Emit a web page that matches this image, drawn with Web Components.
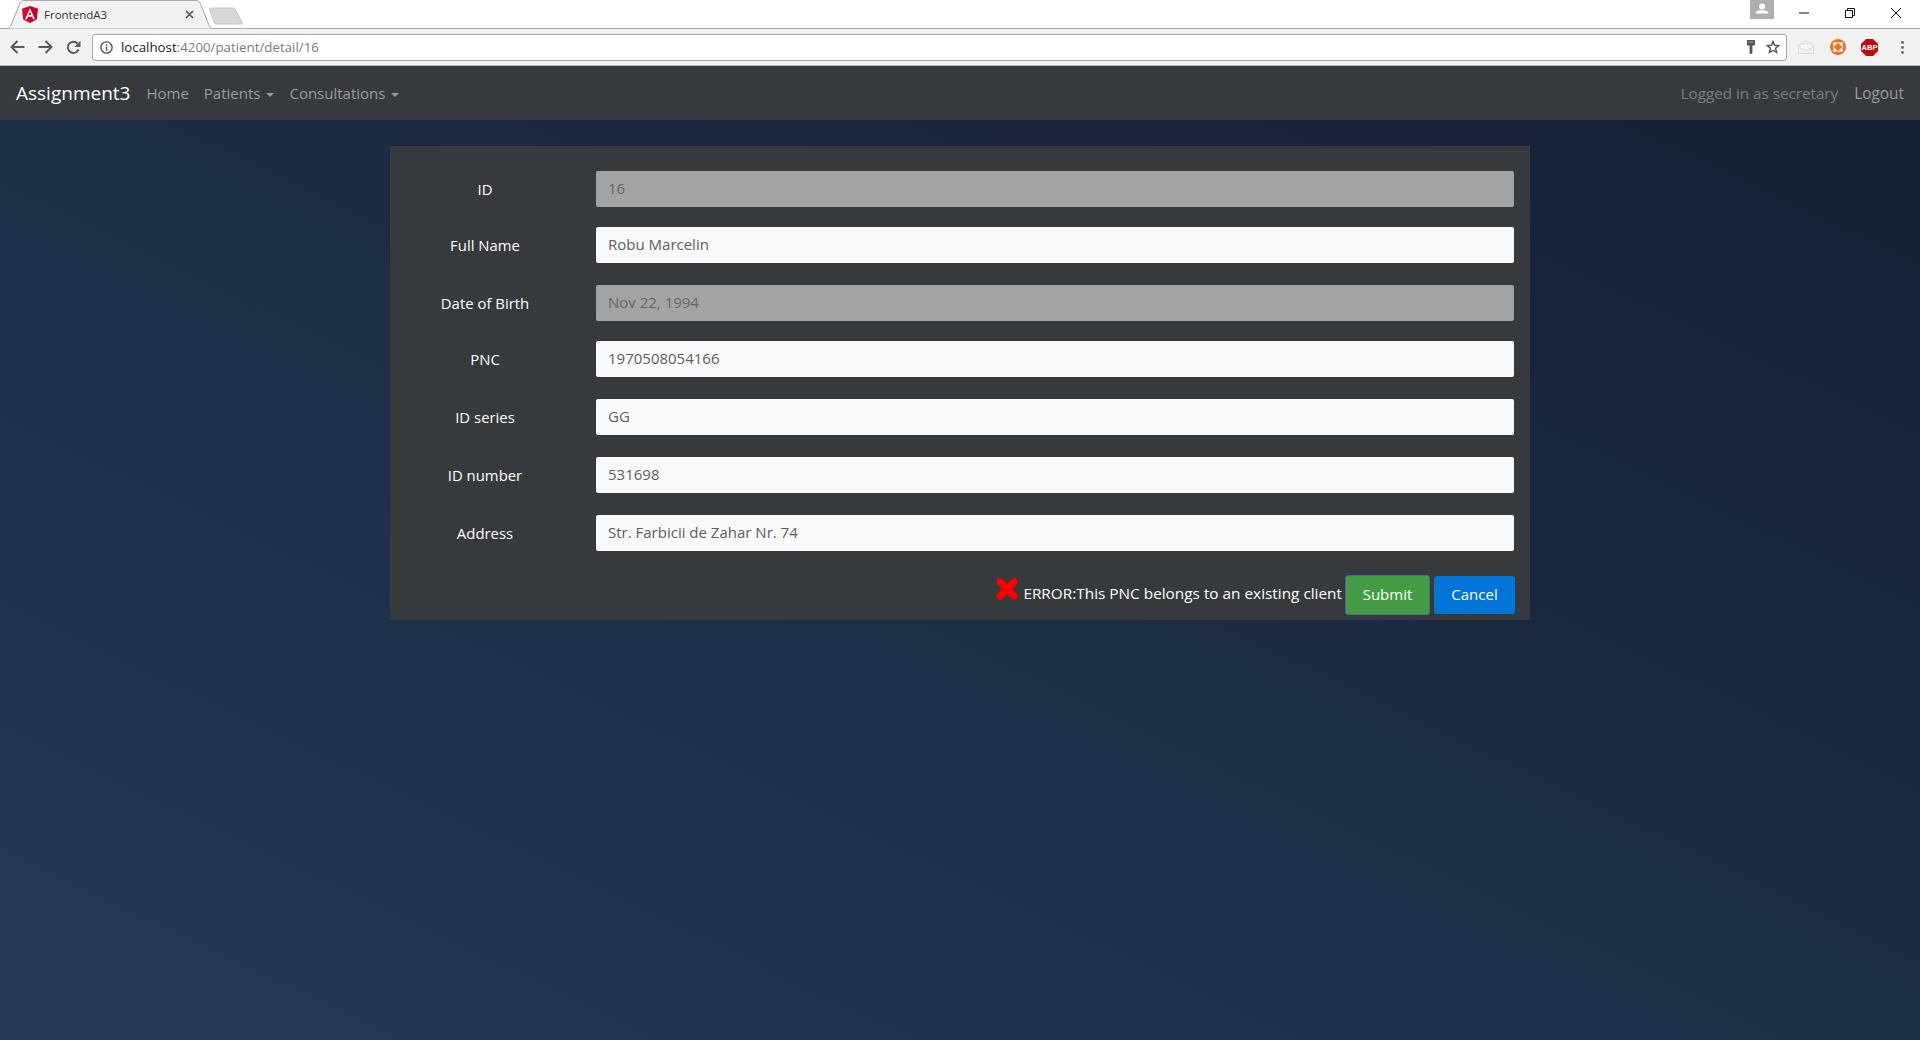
<!DOCTYPE html>
<html>
<head>
<meta charset="utf-8">
<title>FrontendA3</title>
<style>
  html, body { margin: 0; height: 100%; }
  body {
    height: 1040px;
    overflow: hidden;
    display: flex;
    flex-direction: column;
    font-family: "Open Sans", "Noto Sans", sans-serif;
    background: #1c2c48;
  }
</style>
</head>
<body>
<browser-chrome title-text="FrontendA3" host-part="localhost" path-part=":4200/patient/detail/16"></browser-chrome>
<app-navbar brand="Assignment3" user="Logged in as secretary"></app-navbar>
<page-main>
  <patient-form>
    <form-row label="ID" value="16" disabled></form-row>
    <form-row label="Full Name" value="Robu Marcelin"></form-row>
    <form-row label="Date of Birth" value="Nov 22, 1994" disabled></form-row>
    <form-row label="PNC" value="1970508054166"></form-row>
    <form-row label="ID series" value="GG"></form-row>
    <form-row label="ID number" value="531698"></form-row>
    <form-row label="Address" value="Str. Farbicii de Zahar Nr. 74"></form-row>
    <form-actions message="ERROR:This PNC belongs to an existing client"></form-actions>
  </patient-form>
</page-main>

<script>
class BrowserChrome extends HTMLElement {
  constructor() {
    super();
    const shadow = this.attachShadow({mode: 'open'});
    shadow.innerHTML = `
      <style>
        :host {
          display: block;
          height: 66px;
          flex: none;
          font-family: "Open Sans", sans-serif;
          background: #f2f2f2;
        }
        svg { display: block; flex: none; }
        #strip {
          height: 29px;
          box-sizing: border-box;
          background: linear-gradient(#fff 28px, #a9a9a9 28px);
          display: flex;
          align-items: flex-start;
        }
        #tab {
          position: relative;
          margin-left: 6px;
          width: 206px;
          height: 29px;
          display: flex;
          align-items: center;
          flex: none;
        }
        #tab-bg { position: absolute; left: 0; top: 0; }
        #tab > :not(#tab-bg) { position: relative; }
        #favicon { margin-left: 16px; margin-top: -1px; }
        #title {
          margin-left: 6px;
          font-size: 11.5px;
          color: #333;
          flex: 1;
          margin-top: -1px;
        }
        #tab-close { margin-right: 18px; margin-top: -1px; }
        #new-tab { margin: 7px 0 0 -3px; }
        #window {
          margin-left: auto;
          display: flex;
          align-items: flex-start;
        }
        #user { margin-right: 25px; }
        #win-min { margin: 12px 36px 0 0; }
        #win-max { margin: 8px 36px 0 0; }
        #win-close { margin: 8px 19px 0 0; }
        #toolbar {
          height: 36px;
          display: flex;
          align-items: center;
          border-bottom: 1px solid #b9b9b9;
        }
        #nav-icons {
          display: flex;
          align-items: center;
          gap: 13px;
          margin: 0 11px 0 10px;
        }
        #omnibox {
          flex: none;
          width: 1695px;
          height: 27px;
          box-sizing: border-box;
          background: #fff;
          border: 1px solid #a9a9a9;
          border-radius: 3px;
          display: flex;
          align-items: center;
          padding: 0 6px 0 7px;
        }
        #url {
          margin-left: 8px;
          font-size: 13.3px;
          color: #7a7a7a;
          flex: 1;
          white-space: nowrap;
        }
        #url b { font-weight: 400; color: #222; }
        #omni-right { display: flex; gap: 11px; align-items: center; }
        #ext {
          display: flex;
          align-items: center;
          margin-left: 11px;
        }
        #abp { position: relative; width: 17px; height: 17px; margin: 0 23px 0 15px; }
        #abp svg { position: absolute; left: 0; top: 0; }
        #abp span {
          position: relative;
          display: block;
          font: 700 7.5px/17px "Liberation Sans", sans-serif;
          color: #fff;
          text-align: center;
        }
      </style>
      <div id="strip">
        <div id="tab">
          <svg id="tab-bg" width="206" height="29" viewBox="0 0 206 29">
            <path d="M0 28.5 H1 C3 28.5 4 27 5 25 L14 3 C15 1 16 .5 18 .5 H190 C192 .5 193 1 194 3 L203 25 C204 27 205 28.5 206 28.5" fill="#f2f2f2" stroke="#a9a9a9"/>
          </svg>
          <svg id="favicon" width="16" height="17" viewBox="0 0 16 17">
            <path d="M8 0 L0 2.8 L1.2 13.4 L8 17 Z" fill="#dd0031"/>
            <path d="M8 0 L16 2.8 L14.8 13.4 L8 17 Z" fill="#c3002f"/>
            <path d="M8 2.2 L3 13.2 H4.9 L5.9 10.7 H10.1 L11.1 13.2 H13 Z M6.6 9.1 L8 5.8 L9.4 9.1 Z" fill="#fff" fill-rule="evenodd"/>
          </svg>
          <span id="title"></span>
          <svg id="tab-close" width="9" height="9" viewBox="0 0 9 9">
            <path d="M1 1 L8 8 M8 1 L1 8" stroke="#5a5a5a" stroke-width="1.7"/>
          </svg>
        </div>
        <svg id="new-tab" width="34" height="18" viewBox="0 0 34 18">
          <path d="M1.5 1 H24 C25 1 25.5 1.4 26 2.2 L33 15 C33.6 16.4 33 17 32 17 H7 C6 17 5.4 16.5 5 15.6 L.6 2.4 C.3 1.5 .6 1 1.5 1 Z" fill="#d6d6d6" stroke="#c6c6c6"/>
        </svg>
        <div id="window">
          <svg id="user" width="24" height="19" viewBox="0 0 24 19">
            <rect width="24" height="19" fill="#aeaeae"/>
            <circle cx="12" cy="6.6" r="3" fill="#fff"/>
            <path d="M5.5 13.5 C6 10.8 9 10.3 12 10.3 C15 10.3 18 10.8 18.5 13.5 Z" fill="#fff"/>
          </svg>
          <svg id="win-min" width="10" height="2" viewBox="0 0 10 2"><rect width="10" height="1" y=".5" fill="#111"/></svg>
          <svg id="win-max" width="10" height="10" viewBox="0 0 10 10">
            <path d="M2.5 2.5 V.5 H9.5 V7.5 H7.5 M.5 2.5 H7.5 V9.5 H.5 Z" fill="none" stroke="#111"/>
          </svg>
          <svg id="win-close" width="10" height="10" viewBox="0 0 10 10">
            <path d="M0 0 L10 10 M10 0 L0 10" stroke="#111" stroke-width="1"/>
          </svg>
        </div>
      </div>
      <div id="toolbar">
        <div id="nav-icons">
          <svg width="15" height="14" viewBox="0 0 15 14"><path d="M14.5 7 H2 M7.5 1 L1.5 7 L7.5 13" fill="none" stroke="#5a5a5a" stroke-width="2"/></svg>
          <svg width="15" height="14" viewBox="0 0 15 14"><path d="M.5 7 H13 M7.5 1 L13.5 7 L7.5 13" fill="none" stroke="#5a5a5a" stroke-width="2"/></svg>
          <svg width="15" height="15" viewBox="0 0 15 15"><path d="M12.6 9.5 A5.6 5.6 0 1 1 11.6 3.5" fill="none" stroke="#5a5a5a" stroke-width="2"/><path d="M14.5 .8 V7 H8.3 Z" fill="#5a5a5a"/></svg>
        </div>
        <div id="omnibox">
          <svg width="13" height="13" viewBox="0 0 13 13">
            <circle cx="6.5" cy="6.5" r="5.6" fill="none" stroke="#555" stroke-width="1.4"/>
            <rect x="5.8" y="5.6" width="1.5" height="4" fill="#555"/>
            <rect x="5.8" y="3.2" width="1.5" height="1.5" fill="#555"/>
          </svg>
          <span id="url"></span>
          <div id="omni-right">
            <svg width="8" height="14" viewBox="0 0 8 14"><path d="M0 .5 Q0 0 .5 0 H7.5 Q8 0 8 .5 V5 Q8 5.5 7.5 5.5 H5.4 V13 L4.4 14 H3.4 L2.6 13 V5.5 H.5 Q0 5.5 0 5 Z" fill="#555"/><rect x="1.5" y="1.5" width="5" height="1" fill="#aaa"/></svg>
            <svg width="14" height="14" viewBox="0 0 14 14"><path d="M7 1.5 L8.6 5.3 L12.8 5.6 L9.6 8.3 L10.6 12.4 L7 10.2 L3.4 12.4 L4.4 8.3 L1.2 5.6 L5.4 5.3 Z" fill="none" stroke="#555" stroke-width="1.4"/></svg>
          </div>
        </div>
        <div id="ext">
          <svg width="16" height="14" viewBox="0 0 16 14">
            <path d="M.5 5 L8 1 L15.5 5 V13.5 H.5 Z" fill="#eee" stroke="#dcdcdc"/>
            <path d="M2 4 H14 V8 L8 10 L2 8 Z" fill="#f8f8f8" stroke="#dedede"/>
          </svg>
          <svg style="margin-left:16px" width="16" height="16" viewBox="0 0 16 16">
            <circle cx="8" cy="8" r="8" fill="#f0701f"/>
            <path d="M3.6 3.6 L6 6 M12.4 3.6 L10 6 M3.6 12.4 L6 10 M12.4 12.4 L10 10" stroke="#fff" stroke-width="2.6"/>
            <circle cx="8" cy="8" r="4.4" fill="none" stroke="#fff" stroke-width="1"/>
            <circle cx="8" cy="8" r="2.6" fill="#f0701f"/>
          </svg>
          <div id="abp">
            <svg width="17" height="17" viewBox="0 0 17 17"><path d="M5 0 H12 L17 5 V12 L12 17 H5 L0 12 V5 Z" fill="#c10a0a"/></svg>
            <span>ABP</span>
          </div>
          <svg width="3" height="13" viewBox="0 0 3 13">
            <circle cx="1.5" cy="1.5" r="1.4" fill="#666"/>
            <circle cx="1.5" cy="6.5" r="1.4" fill="#666"/>
            <circle cx="1.5" cy="11.5" r="1.4" fill="#666"/>
          </svg>
        </div>
      </div>
    `;
    shadow.getElementById('title').textContent = this.getAttribute('title-text');
    const host = document.createElement('b');
    host.textContent = this.getAttribute('host-part');
    const url = shadow.getElementById('url');
    url.append(host, this.getAttribute('path-part'));
  }
}
customElements.define('browser-chrome', BrowserChrome);

class AppNavbar extends HTMLElement {
  constructor() {
    super();
    const shadow = this.attachShadow({mode: 'open'});
    shadow.innerHTML = `
      <style>
        :host {
          display: flex;
          align-items: center;
          flex: none;
          height: 54px;
          box-sizing: border-box;
          padding: 0 16px;
          background: #373a3c;
          font-size: 15px;
          color: #9a9b9d;
        }
        #brand { font-size: 19px; color: #fff; margin-right: 16px; }
        nav { display: flex; gap: 15px; align-items: center; }
        .caret::after {
          content: "";
          display: inline-block;
          margin-left: 6px;
          vertical-align: 2px;
          border-top: 4px solid;
          border-left: 4px solid transparent;
          border-right: 4px solid transparent;
        }
        #right { margin-left: auto; display: flex; gap: 16px; }
        #user { color: #7a7e81; font-size: 15.2px; }
        #logout { font-size: 15.4px; }
      </style>
      <span id="brand"></span>
      <nav>
        <span>Home</span>
        <span class="caret">Patients</span>
        <span class="caret">Consultations</span>
      </nav>
      <div id="right">
        <span id="user"></span>
        <span id="logout">Logout</span>
      </div>
    `;
    shadow.getElementById('brand').textContent = this.getAttribute('brand');
    shadow.getElementById('user').textContent = this.getAttribute('user');
  }
}
customElements.define('app-navbar', AppNavbar);

class PageMain extends HTMLElement {
  constructor() {
    super();
    const shadow = this.attachShadow({mode: 'open'});
    shadow.innerHTML = `
      <style>
        :host {
          display: block;
          flex: 1;
          padding-top: 26px;
          background: linear-gradient(to top right, #243a53 0%, #1c2d46 50%, #151f36 100%);
        }
      </style>
      <slot></slot>
    `;
  }
}
customElements.define('page-main', PageMain);

class PatientForm extends HTMLElement {
  constructor() {
    super();
    const shadow = this.attachShadow({mode: 'open'});
    shadow.innerHTML = `
      <style>
        :host {
          display: grid;
          grid-template-rows: 56px 58px 56px 58px 58px 58px 60px;
          box-sizing: border-box;
          width: 1140px;
          height: 474px;
          margin: 0 0 0 390px;
          padding: 25px 16px 0 0;
          background: #373a3c;
        }
      </style>
      <slot></slot>
    `;
  }
}
customElements.define('patient-form', PatientForm);

class FormRow extends HTMLElement {
  constructor() {
    super();
    const shadow = this.attachShadow({mode: 'open'});
    shadow.innerHTML = `
      <style>
        :host {
          display: grid;
          grid-template-columns: 190px 1fr;
          column-gap: 16px;
          align-items: start;
          font-size: 15px;
        }
        label {
          height: 36px;
          line-height: 37px;
          text-align: center;
          color: #fff;
          font-weight: 500;
          font-size: 14.9px;
        }
        input {
          display: block;
          width: 100%;
          height: 36px;
          box-sizing: border-box;
          margin: 0;
          padding: 0 12px 2px;
          border: 0;
          border-radius: 2px;
          outline: 0;
          background: #f9f9f9;
          color: #5c6063;
          font: inherit;
        }
        input:disabled { background: #a3a3a3; color: #62666a; opacity: 1; }
      </style>
      <label for="field"></label>
      <input id="field">
    `;
    shadow.querySelector('label').textContent = this.getAttribute('label');
    const input = shadow.getElementById('field');
    input.value = this.getAttribute('value');
    input.disabled = this.hasAttribute('disabled');
  }
}
customElements.define('form-row', FormRow);

class FormActions extends HTMLElement {
  constructor() {
    super();
    const shadow = this.attachShadow({mode: 'open'});
    shadow.innerHTML = `
      <style>
        :host {
          display: flex;
          justify-content: flex-end;
          align-items: flex-start;
          margin-right: -1px;
          font-size: 15px;
          color: #fff;
        }
        svg { margin: 3px 5px 0 0; flex: none; }
        #msg { line-height: 36px; margin-right: 3px; white-space: nowrap; font-weight: 500; font-size: 15.35px; }
        button {
          box-sizing: border-box;
          font: inherit;
          font-weight: 500;
          color: #fff;
          border-radius: 3px;
          padding: 0 0 2px;
        }
        #submit { width: 85px; height: 40px; background: #449d44; border: 1px solid #3f6da0; }
        #cancel { width: 81px; height: 38px; margin: 1px 0 0 4px; background: #0275d8; border: 0; }
      </style>
      <svg width="22" height="22" viewBox="0 0 22 22">
        <path d="M4 4 L18 18 M18 4 L4 18" stroke="#ff0000" stroke-width="7" stroke-linecap="round"/>
      </svg>
      <span id="msg"></span>
      <button id="submit">Submit</button>
      <button id="cancel">Cancel</button>
    `;
    shadow.getElementById('msg').textContent = this.getAttribute('message');
  }
}
customElements.define('form-actions', FormActions);
</script>
</body>
</html>
